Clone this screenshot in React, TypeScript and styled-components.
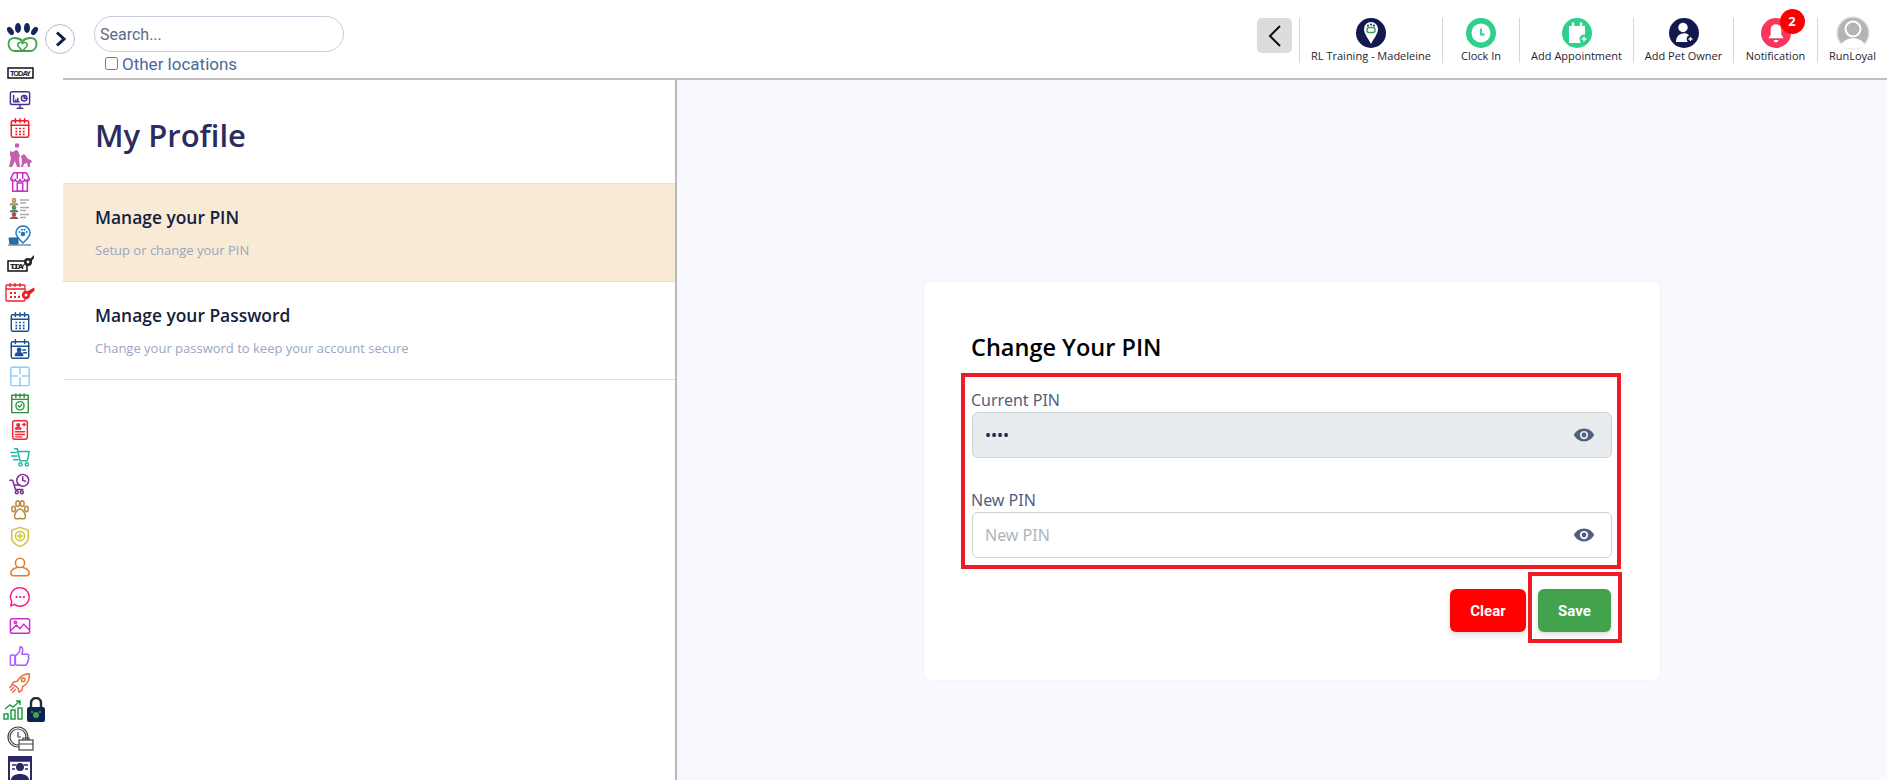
import styled, { createGlobalStyle } from 'styled-components';
import { ReactNode } from 'react';

const GlobalStyle = createGlobalStyle`
  html, body {
    margin: 0;
    padding: 0;
    height: 100%;
    overflow: hidden;
    background: #fff;
    font-family: "Open Sans", "Liberation Sans", sans-serif;
  }
  * { box-sizing: border-box; }
`;

const Layout = styled.div`
  display: grid;
  grid-template-columns: 63px 1fr;
  width: 1887px;
  height: 780px;
  overflow: hidden;
`;

const Sidebar = styled.nav`
  display: flex;
  flex-direction: column;
  align-items: center;
  padding: 15px 23px 0 0;
  height: 780px;
  overflow: hidden;
`;

const NavSlot = styled.div<{ $h: number }>`
  position: relative;
  flex: 0 0 ${(p) => p.$h}px;
  height: ${(p) => p.$h}px;
  width: 40px;
  display: flex;
  align-items: center;
  justify-content: center;
`;

const LockBadge = styled.div`
  position: absolute;
  left: 26px;
  top: 1px;
  width: 20px;
  height: 25px;
`;

const Main = styled.div`
  display: flex;
  flex-direction: column;
  min-width: 0;
`;

const TopBar = styled.header`
  position: relative;
  flex: 0 0 80px;
  display: flex;
  justify-content: space-between;
  padding: 16px 0 0 31px;
  background: #fff;
  border-bottom: 2px solid #c0c0c0;
`;

const ToggleButton = styled.button`
  position: absolute;
  left: -18px;
  top: 24px;
  width: 30px;
  height: 30px;
  padding: 0;
  border-radius: 50%;
  border: 1px solid #b4bad2;
  background: #fff;
  display: flex;
  align-items: center;
  justify-content: center;
`;

const SearchColumn = styled.div`
  display: flex;
  flex-direction: column;
  width: 251px;
`;

const SearchInput = styled.input`
  width: 250px;
  height: 36px;
  border: 1px solid #c5ccdc;
  border-radius: 18px;
  padding: 0 5px;
  font: 400 16px Roboto, sans-serif;
  outline: none;
  &::placeholder { color: #5f6b85; opacity: 1; }
`;

const LocationRow = styled.label`
  display: flex;
  align-items: center;
  gap: 4px;
  margin: 2px 0 0 11px;
  height: 19px;
  font: 400 17px Roboto, sans-serif;
  color: #4c6a97;
  white-space: nowrap;
  input { margin: 0; width: 13px; height: 13px; }
`;

const Actions = styled.div`
  display: flex;
  align-items: flex-start;
  padding-top: 2px;
`;

const BackButton = styled.div`
  width: 35px;
  height: 35px;
  margin-right: 7px;
  background: #dcdcdc;
  border-radius: 5px;
  display: flex;
  align-items: center;
  justify-content: center;
`;

const ActionItem = styled.div<{ $w: number }>`
  width: ${(p) => p.$w}px;
  height: 45px;
  border-left: 1px solid #d6d6d6;
  display: flex;
  flex-direction: column;
  align-items: center;
  font-size: 11px;
  line-height: 15px;
  color: #1f2430;
  white-space: nowrap;
`;

const ActionIcon = styled.div<{ $bg: string }>`
  position: relative;
  width: 30px;
  height: 30px;
  border-radius: 50%;
  background: ${(p) => p.$bg};
  display: flex;
  align-items: center;
  justify-content: center;
`;

const CountBadge = styled.span`
  position: absolute;
  top: -9px;
  left: 19px;
  width: 25px;
  height: 25px;
  border-radius: 50%;
  background: #fb0000;
  color: #fff;
  font: 700 13px/25px "Open Sans", sans-serif;
  text-align: center;
`;

const AvatarFrame = styled.div`
  height: 30px;
  display: flex;
  align-items: center;
`;

const Content = styled.div`
  flex: 1;
  display: grid;
  grid-template-columns: 614px 1fr;
  min-height: 0;
`;

const ProfilePanel = styled.aside`
  background: #fff;
  border-right: 2px solid #b9b9b9;
`;

const PanelTitle = styled.h1`
  margin: 0;
  height: 103px;
  padding: 34px 0 0 32px;
  font-size: 31px;
  line-height: 42px;
  font-weight: 600;
  color: #2b2d5e;
`;

const MenuItem = styled.div<{ $active?: boolean }>`
  height: 98px;
  padding: 21px 0 0 32px;
  background: ${(p) => (p.$active ? '#f9ead6' : '#fff')};
  border-top: 1px solid #e2e2e2;
  &:last-child { border-bottom: 1px solid #e2e2e2; height: 99px; }
`;

const MenuTitle = styled.div`
  font-size: 17.4px;
  line-height: 24px;
  font-weight: 600;
  color: #14213d;
`;

const MenuText = styled.div`
  margin-top: 13px;
  font-size: 13px;
  line-height: 16px;
  color: #9aa6bf;
`;

const Stage = styled.main`
  background: #f8f9fe;
  padding: 202px 0 0 247px;
`;

const Card = styled.section`
  position: relative;
  width: 736px;
  height: 398px;
  padding: 49px 48px 0 47px;
  background: #fff;
  border-radius: 6px;
  box-shadow: 0 0 2px rgba(120, 130, 170, 0.12);
`;

const CardTitle = styled.h2`
  margin: 0 0 26px;
  font-size: 23.5px;
  line-height: 32px;
  font-weight: 600;
  color: #000;
`;

const Field = styled.div`
  margin-bottom: 31px;
`;

const FieldLabel = styled.label`
  display: block;
  font: 400 16px/22px "Noto Sans", sans-serif;
  color: #525f7f;
  margin-bottom: 1px;
`;

const InputWrap = styled.div`
  position: relative;
  padding-left: 1px;
`;

const PinInput = styled.input<{ $filled?: boolean }>`
  display: block;
  width: 640px;
  height: 46px;
  padding: 0 12px;
  border: 1px solid #cad1d7;
  border-radius: 6px;
  background: ${(p) => (p.$filled ? '#e9ecef' : '#fff')};
  color: #172b6b;
  font: 400 16px "Noto Sans", sans-serif;
  outline: none;
  &::placeholder { color: #adb5bd; opacity: 1; }
`;

const EyeIcon = styled.span`
  position: absolute;
  right: 17px;
  top: 12px;
  display: flex;
`;

const ButtonRow = styled.div`
  display: flex;
  justify-content: flex-end;
  gap: 12px;
  margin-top: 1px;
  padding-right: 1px;
`;

const ActionButton = styled.button<{ $bg: string; $w: number }>`
  width: ${(p) => p.$w}px;
  height: 43px;
  border: none;
  border-radius: 6px;
  background: ${(p) => p.$bg};
  color: #fff;
  font: 700 15px Roboto, sans-serif;
  box-shadow: 0 4px 6px rgba(50, 50, 93, 0.11), 0 1px 3px rgba(0, 0, 0, 0.08);
`;

const Callout = styled.div<{ $left: number; $top: number; $w: number; $h: number }>`
  position: absolute;
  left: ${(p) => p.$left}px;
  top: ${(p) => p.$top}px;
  width: ${(p) => p.$w}px;
  height: ${(p) => p.$h}px;
  border: 4px solid #ed1c24;
  pointer-events: none;
`;

const Line = ({ c, w = 1.6, size = 22, children }: { c: string; w?: number; size?: number; children: ReactNode }) => (
  <svg width={size} height={size} viewBox="0 0 24 24" fill="none" stroke={c} strokeWidth={w} strokeLinecap="round" strokeLinejoin="round">
    {children}
  </svg>
);

const Logo = () => (
  <svg width="31" height="30" viewBox="0 0 31 30" style={{ marginLeft: 5 }}>
    <ellipse cx="3.500" cy="8" rx="2.700" ry="4.500" fill="#14265c" transform="rotate(-35 3.500 8)" />
    <ellipse cx="11" cy="5" rx="3" ry="5" fill="#14265c" />
    <ellipse cx="20" cy="5" rx="3" ry="5" fill="#14265c" />
    <ellipse cx="27.500" cy="8" rx="2.700" ry="4.500" fill="#14265c" transform="rotate(35 27.500 8)" />
    <path d="M15.500 18c-2-2-5-3-8-3-3.500 0-6 2-6 6s2.500 7 6 7h16c3.500 0 6-3 6-7s-2.500-6-6-6c-3 0-6 1-8 3z" fill="none" stroke="#3fa34d" strokeWidth="1.800" />
    <path d="M15.500 28l-4.500-5c-1.500-3 3-5 4.500-2.500 1.500-2.500 6-.5 4.500 2.500z" fill="none" stroke="#3fa34d" strokeWidth="1.500" />
  </svg>
);

const TodayBox = ({ whistle }: { whistle?: boolean }) => (
  <svg width="27" height={whistle ? 18 : 13} viewBox={whistle ? '0 0 27 18' : '0 0 27 13'}>
    <g transform={whistle ? 'translate(0 6)' : undefined}>
      <rect x="1" y="1" width={whistle ? 19 : 25} height="10" fill="#fff" stroke="#000" strokeWidth="1.4" />
      <text x="3" y="9" fontFamily="Liberation Sans, sans-serif" fontWeight="700" fontSize="7.4" fill="#222" textLength={whistle ? 15 : 21}>TODAY</text>
    </g>
    {whistle && (
      <g>
        <circle cx="21" cy="8" r="4" fill="#222" />
        <circle cx="21" cy="8" r="1.4" fill="#fff" />
        <path d="M22 6l5-5 0 3-3 4z" fill="#222" />
      </g>
    )}
  </svg>
);

const Calendar = ({ c }: { c: string }) => (
  <Line c={c}>
    <rect x="2.500" y="4" width="19" height="18" rx="1.500" />
    <path d="M2.500 9h19M7 2v4M12 2v4M17 2v4" />
    <path d="M7 12.500h2M11 12.500h2M15 12.500h2M7 16h2M11 16h2M15 16h2M7 19h2M11 19h2M15 19h2" strokeWidth="1.800" strokeLinecap="butt" />
  </Line>
);

const Whistle = () => (
  <g stroke="none">
    <circle cx="21" cy="13" r="4.200" fill="#ef1f2a" />
    <circle cx="21" cy="13" r="1.500" fill="#fff" />
    <path d="M22 9.500L29 5.500l.8 2.800-5 4.500z" fill="#ef1f2a" />
  </g>
);

const sideIcons: { h: number; icon: ReactNode; lock?: boolean }[] = [
  { h: 45, icon: <Logo /> },
  { h: 26, icon: <TodayBox /> },
  {
    h: 28,
    icon: (
      <Line c="#4b2f8f">
        <rect x="1.500" y="3" width="21" height="14" rx="2" />
        <path d="M9 21h6M12 17v4M5 7v7h6M7.500 12v2M9.500 10v4" />
        <circle cx="16.500" cy="10" r="3" />
        <path d="M16.500 7v3h3" />
      </Line>
    ),
  },
  { h: 27, icon: <Calendar c="#ee1c25" /> },
  {
    h: 28,
    icon: (
      <svg width="24" height="24" viewBox="0 0 24 24" fill="#c45fae">
        <circle cx="9" cy="2.500" r="2.300" />
        <path d="M2 8l3 1 3-2 2 1 2 5-1 2 1 9H9l-2-6-3 6H1l2-9-1-3z" />
        <path d="M13 13l3-2 1 1 3 4 3 1 1 2-2 1 0 4h-2l-1-4-3 1-1 3h-2l1-6z" />
      </svg>
    ),
  },
  {
    h: 26,
    icon: (
      <Line c="#c92cc7">
        <path d="M4 9v13h16V9" />
        <path d="M5 2h14l3 6a2.500 2.500 0 0 1-5 1 2.500 2.500 0 0 1-5 0 2.500 2.500 0 0 1-5 0 2.500 2.500 0 0 1-5-1z" />
        <rect x="9" y="13" width="6" height="9" />
        <path d="M9 2v6M15 2v6" />
      </Line>
    ),
  },
  {
    h: 27,
    icon: (
      <svg width="22" height="21" viewBox="0 0 22 21">
        <circle cx="5" cy="2.200" r="1.900" fill="#e8b93c" stroke="#444" strokeWidth=".5" />
        <path d="M1 7c0-3 8-3 8 0z" fill="#e8b93c" stroke="#444" strokeWidth=".5" />
        <circle cx="5" cy="9.500" r="1.900" fill="#49a265" stroke="#444" strokeWidth=".5" />
        <path d="M1 14c0-3 8-3 8 0z" fill="#49a265" stroke="#444" strokeWidth=".5" />
        <circle cx="5" cy="16.500" r="1.900" fill="#d4413c" stroke="#444" strokeWidth=".5" />
        <path d="M1 21c0-3 8-3 8 0z" fill="#d4413c" stroke="#444" strokeWidth=".5" />
        <path d="M11 2h9M11 5h6M11 9.500h9M11 12.500h6M11 16.500h9M11 19.500h6" stroke="#aaa" strokeWidth="1.400" />
      </svg>
    ),
  },
  {
    h: 27,
    icon: (
      <svg width="24" height="21" viewBox="0 0 24 21">
        <path d="M15 1a7 7 0 0 1 7 7c0 4-4 7-7 10-3-3-7-6-7-10a7 7 0 0 1 7-7z" fill="#fff" stroke="#1c77c3" strokeWidth="1.500" />
        <circle cx="15" cy="9" r="2.300" fill="#1c77c3" />
        <circle cx="11.500" cy="7" r="1" fill="#1c77c3" />
        <circle cx="14" cy="4.800" r="1" fill="#1c77c3" />
        <circle cx="16.500" cy="4.800" r="1" fill="#1c77c3" />
        <circle cx="18.700" cy="7" r="1" fill="#1c77c3" />
        <path d="M1 13h9v6H2zM0 20h23" fill="#2a6ea8" stroke="#1c5f97" strokeWidth="1" />
      </svg>
    ),
  },
  { h: 27, icon: <TodayBox whistle /> },
  {
    h: 32,
    icon: (
      <svg width="30" height="20" viewBox="0 0 30 20" fill="none" stroke="#ef1f2a" strokeWidth="1.300">
        <rect x="1" y="3" width="19" height="16" rx="1" />
        <path d="M1 7h19M5 1v4M10 1v4M15 1v4" />
        <path d="M5 11h2M9 11h2M5 15h2M9 15h2M13 15h2" strokeWidth="2" />
        <Whistle />
      </svg>
    ),
  },
  { h: 28, icon: <Calendar c="#1c4f94" /> },
  {
    h: 26,
    icon: (
      <Line c="#1c4f94">
        <rect x="2.500" y="4" width="19" height="18" rx="1.500" />
        <path d="M2.500 9h19M7 2v4M17 2v4" />
        <circle cx="11" cy="13" r="1.800" fill="#1c4f94" />
        <path d="M7 19c0-4 8-4 8 0zM15 13h3M16 16h3" fill="#1c4f94" />
      </Line>
    ),
  },
  {
    h: 27,
    icon: (
      <Line c="#8ecbfb">
        <rect x="2" y="2.500" width="20" height="20" rx="1.500" />
        <path d="M12 2.500v7M12 14v8.500M2 12h7M14 12h8" />
      </Line>
    ),
  },
  {
    h: 27,
    icon: (
      <Line c="#2d8f3b" w={1.5}>
        <rect x="3" y="3.500" width="18" height="19" />
        <path d="M3 8h18M7.500 2v4M12 2v4M16.500 2v4" />
        <circle cx="12" cy="15" r="4.500" />
        <path d="M10 15l1.500 1.500 2.500-3" />
      </Line>
    ),
  },
  {
    h: 27,
    icon: (
      <Line c="#ee2a33">
        <rect x="4" y="2" width="16" height="20" rx="2" />
        <circle cx="10" cy="6.500" r="1.400" fill="#ee2a33" />
        <path d="M7 11c0-2.500 6-2.500 6 0zM15 6h3M16.500 4.500v3M7 14h10M7 17h10M7 19.500h7" />
      </Line>
    ),
  },
  {
    h: 27,
    icon: (
      <Line c="#27b5a8">
        <path d="M6 3h3l3 13h8l2-10H10M2 7h6M3 11h6M5 15h5" />
        <circle cx="12.500" cy="20" r="1.800" />
        <circle cx="19.500" cy="20" r="1.800" />
      </Line>
    ),
  },
  {
    h: 27,
    icon: (
      <Line c="#7a2b95">
        <circle cx="15" cy="8" r="6.500" />
        <path d="M15 4v4l3 1M1 8h3l3 10h8M6 13h6" />
        <circle cx="8.500" cy="21" r="1.600" />
        <circle cx="14" cy="21" r="1.600" />
      </Line>
    ),
  },
  {
    h: 26,
    icon: (
      <Line c="#b48a3c">
        <ellipse cx="5" cy="11" rx="2" ry="3" />
        <ellipse cx="9.500" cy="5" rx="2" ry="3.200" />
        <ellipse cx="14.500" cy="5" rx="2" ry="3.200" />
        <ellipse cx="19" cy="11" rx="2" ry="3" />
        <path d="M12 11c-3 0-6 5-6 8s3 3 6 2c3 1 6 1 6-2s-3-8-6-8z" />
      </Line>
    ),
  },
  {
    h: 28,
    icon: (
      <Line c="#cdc238">
        <path d="M12 1.500l9 3v8c0 5-4 8-9 10-5-2-9-5-9-10v-8z" />
        <circle cx="12" cy="11" r="5" />
        <path d="M12 8.500v5M9.500 11h5" />
      </Line>
    ),
  },
  {
    h: 32,
    icon: (
      <Line c="#e8772e">
        <circle cx="12" cy="7.500" r="5" />
        <path d="M9 12.500c-4 1-7 3-7 6 0 2 1 3 3 3h14c2 0 3-1 3-3 0-3-3-5-7-6" />
      </Line>
    ),
  },
  {
    h: 27,
    icon: (
      <Line c="#fb1a80">
        <path d="M12 2a10 10 0 1 1-6 18l-4 1.500 1-4.500A10 10 0 0 1 12 2z" />
        <path d="M8 12h.5M12 12h.5M16 12h.5" strokeWidth="2" />
      </Line>
    ),
  },
  {
    h: 32,
    icon: (
      <Line c="#cc30c9">
        <rect x="1.500" y="4" width="21" height="16" rx="2" />
        <path d="M2 17l6-6 4 4 4-5 6 6" />
        <circle cx="7" cy="8" r="1.300" />
      </Line>
    ),
  },
  {
    h: 27,
    icon: (
      <Line c="#a85cff">
        <rect x="1.500" y="11" width="5" height="11" rx="1" />
        <path d="M7 12l4-4c1-2 1-4 1-6 2 0 3 2 3 4l-1 4h6c2 0 2 2 1 3 1 1 1 3-.5 3.500.5 2 0 3-1 3.500 0 1.500-1 2-2 2H9c-1 0-2-1-2-1z" />
      </Line>
    ),
  },
  {
    h: 27,
    icon: (
      <Line c="#f26a36">
        <path d="M22 2c-6 0-10 3-13 8l-4 1-2 3 4 1 3 3 1 4 3-2 1-4c5-3 8-7 7-14z" />
        <circle cx="15.500" cy="8.500" r="2" />
        <path d="M5 17l-3 3M7 19l-3 3M3 15l-2 2" />
      </Line>
    ),
  },
  {
    h: 27,
    lock: true,
    icon: (
      <svg width="22" height="22" viewBox="0 0 22 22" fill="none" stroke="#22a045" strokeWidth="1.500" style={{ marginLeft: -13 }}>
        <rect x="1" y="15" width="4" height="5" />
        <rect x="8" y="11" width="4" height="9" />
        <rect x="15" y="9" width="4" height="11" />
        <path d="M2 10l5-4 3 2 7-6M13 2h4v4" />
      </svg>
    ),
  },
  {
    h: 31,
    icon: (
      <svg width="27" height="25" viewBox="0 0 27 25" fill="none" stroke="#444" strokeWidth="1.200">
        <circle cx="11" cy="11" r="10" />
        <circle cx="11" cy="11" r="8" />
        <path d="M11 6v5h3" />
        <rect x="12" y="14" width="14" height="10" fill="#fff" />
        <path d="M16 14v-2h6v2M12 18h14" />
      </svg>
    ),
  },
  {
    h: 30,
    icon: (
      <svg width="24" height="26" viewBox="0 0 24 26">
        <rect x="1" y="1" width="22" height="25" fill="#fff" stroke="#2a2766" strokeWidth="2" />
        <path d="M1 1h22v4H1zM4 9h4M16 9h4M4 13h3M17 13h3" stroke="#2a2766" strokeWidth="1.600" fill="#2a2766" />
        <circle cx="12" cy="11" r="4" fill="#2a2766" />
        <path d="M3 24c0-8 18-8 18 0v2H3z" fill="#2a2766" />
      </svg>
    ),
  },
];

const Eye = () => (
  <svg width="22" height="22" viewBox="0 0 24 24" fill="#525f7f">
    <path d="M12 5C7 5 3 8 1 12c2 4 6 7 11 7s9-3 11-7c-2-4-6-7-11-7zm0 11.500a4.500 4.500 0 1 1 0-9 4.500 4.500 0 0 1 0 9z" />
    <circle cx="12" cy="12" r="2.600" />
  </svg>
);

const topActions: { label: string; w: number; bg: string; icon: ReactNode; badge?: string }[] = [
  {
    label: 'RL Training - Madeleine',
    w: 143,
    bg: '#12194f',
    icon: (
      <svg width="16" height="24" viewBox="0 0 16 24">
        <path d="M8 1a7 7 0 0 1 7 7c0 5-4 9-7 15-3-6-7-10-7-15a7 7 0 0 1 7-7z" fill="#fff" />
        <circle cx="5" cy="4.500" r="1" fill="#12194f" />
        <circle cx="8" cy="3.500" r="1" fill="#12194f" />
        <circle cx="11" cy="4.500" r="1" fill="#12194f" />
        <rect x="4" y="6.500" width="8" height="5" rx="2" fill="none" stroke="#3a9a5c" strokeWidth="1.400" />
      </svg>
    ),
  },
  {
    label: 'Clock In',
    w: 77,
    bg: '#2ed08c',
    icon: (
      <svg width="22" height="22" viewBox="0 0 22 22">
        <circle cx="11" cy="11" r="9.500" fill="#fff" />
        <path d="M11 6.500V12.500H14.500" fill="none" stroke="#2ed08c" strokeWidth="1.800" />
      </svg>
    ),
  },
  {
    label: 'Add Appointment',
    w: 114,
    bg: '#2ed08c',
    icon: (
      <svg width="22" height="24" viewBox="0 0 22 24">
        <path d="M3 5h16v12l-5 5H3z" fill="#fff" />
        <path d="M7 1.500v5M15 1.500v5" stroke="#fff" strokeWidth="2.400" />
        <circle cx="18" cy="18" r="4.500" fill="#2ed08c" />
        <path d="M18 15.500v5M15.500 18h5" stroke="#fff" strokeWidth="1.500" />
      </svg>
    ),
  },
  {
    label: 'Add Pet Owner',
    w: 100,
    bg: '#12194f',
    icon: (
      <svg width="22" height="24" viewBox="0 0 22 24" fill="#fff">
        <circle cx="10" cy="6.500" r="4.700" />
        <path d="M3 21c0-11 14-11 14-4v4z" />
        <circle cx="17.500" cy="18" r="3.800" fill="#12194f" />
        <path d="M17.500 16v4M15.500 18h4" stroke="#fff" strokeWidth="1.300" />
      </svg>
    ),
  },
  {
    label: 'Notification',
    w: 84,
    bg: '#f9365e',
    badge: '2',
    icon: (
      <svg width="18" height="20" viewBox="0 0 15 17" fill="#fff">
        <path d="M7.500 1c3 0 4.500 2 4.500 5v4l2 3H1l2-3V6c0-3 1.500-5 4.500-5zM5.500 14.500h4a2 2 0 0 1-4 0z" />
      </svg>
    ),
  },
];

const Avatar = () => (
  <svg width="34" height="34" viewBox="0 0 34 34">
    <circle cx="17" cy="17" r="16" fill="#b4b4b4" stroke="#e4e4e4" strokeWidth="1.500" />
    <circle cx="17" cy="13" r="7.500" fill="#b4b4b4" stroke="#fff" strokeWidth="2" />
    <path d="M5 29c4-9 20-9 24 0-6 5-18 5-24 0z" fill="#fff" />
  </svg>
);

const App = () => {
  return (
    <Layout>
      <GlobalStyle />
      <Sidebar>
        {sideIcons.map((item, i) => (
          <NavSlot key={i} $h={item.h}>
            {item.icon}
            {item.lock && (
              <LockBadge>
                <svg width="20" height="25" viewBox="0 0 20 25">
                  <path d="M5 11V6a5 5 0 0 1 10 0v5" fill="none" stroke="#22303c" strokeWidth="2.400" />
                  <rect x="1" y="10" width="18" height="15" rx="2" fill="#0f2350" />
                  <circle cx="10" cy="18" r="3" fill="#3fa34d" />
                  <circle cx="6" cy="15" r="1" fill="#3fa34d" />
                  <circle cx="14" cy="15" r="1" fill="#3fa34d" />
                </svg>
              </LockBadge>
            )}
          </NavSlot>
        ))}
      </Sidebar>
      <Main>
        <TopBar>
          <ToggleButton aria-label="Expand menu">
            <svg width="16" height="18" viewBox="0 0 16 18" fill="none">
              <path d="M5 2.500L12 9l-7 6.500" stroke="#12194f" strokeWidth="3" />
            </svg>
          </ToggleButton>
          <SearchColumn>
            <SearchInput placeholder="Search..." />
            <LocationRow>
              <input type="checkbox" />
              Other locations
            </LocationRow>
          </SearchColumn>
          <Actions>
            <BackButton>
              <svg width="16" height="24" viewBox="0 0 16 24" fill="none">
                <path d="M13 2L3 12l10 10" stroke="#111" strokeWidth="2" />
              </svg>
            </BackButton>
            {topActions.map((a) => (
              <ActionItem key={a.label} $w={a.w}>
                <ActionIcon $bg={a.bg}>
                  {a.icon}
                  {a.badge && <CountBadge>{a.badge}</CountBadge>}
                </ActionIcon>
                {a.label}
              </ActionItem>
            ))}
            <ActionItem $w={70}>
              <AvatarFrame>
                <Avatar />
              </AvatarFrame>
              RunLoyal
            </ActionItem>
          </Actions>
        </TopBar>
        <Content>
          <ProfilePanel>
            <PanelTitle>My Profile</PanelTitle>
            <MenuItem $active>
              <MenuTitle>Manage your PIN</MenuTitle>
              <MenuText>Setup or change your PIN</MenuText>
            </MenuItem>
            <MenuItem>
              <MenuTitle>Manage your Password</MenuTitle>
              <MenuText>Change your password to keep your account secure</MenuText>
            </MenuItem>
          </ProfilePanel>
          <Stage>
            <Card>
              <CardTitle>Change Your PIN</CardTitle>
              <Field>
                <FieldLabel>Current PIN</FieldLabel>
                <InputWrap>
                  <PinInput $filled type="password" defaultValue="1234" readOnly />
                  <EyeIcon><Eye /></EyeIcon>
                </InputWrap>
              </Field>
              <Field>
                <FieldLabel>New PIN</FieldLabel>
                <InputWrap>
                  <PinInput type="password" placeholder="New PIN" />
                  <EyeIcon><Eye /></EyeIcon>
                </InputWrap>
              </Field>
              <ButtonRow>
                <ActionButton $bg="#ff0000" $w={76}>Clear</ActionButton>
                <ActionButton $bg="#43a34d" $w={73}>Save</ActionButton>
              </ButtonRow>
              <Callout $left={37} $top={91} $w={660} $h={196} />
              <Callout $left={604} $top={290} $w={94} $h={71} />
            </Card>
          </Stage>
        </Content>
      </Main>
    </Layout>
  );
};

export default App;
